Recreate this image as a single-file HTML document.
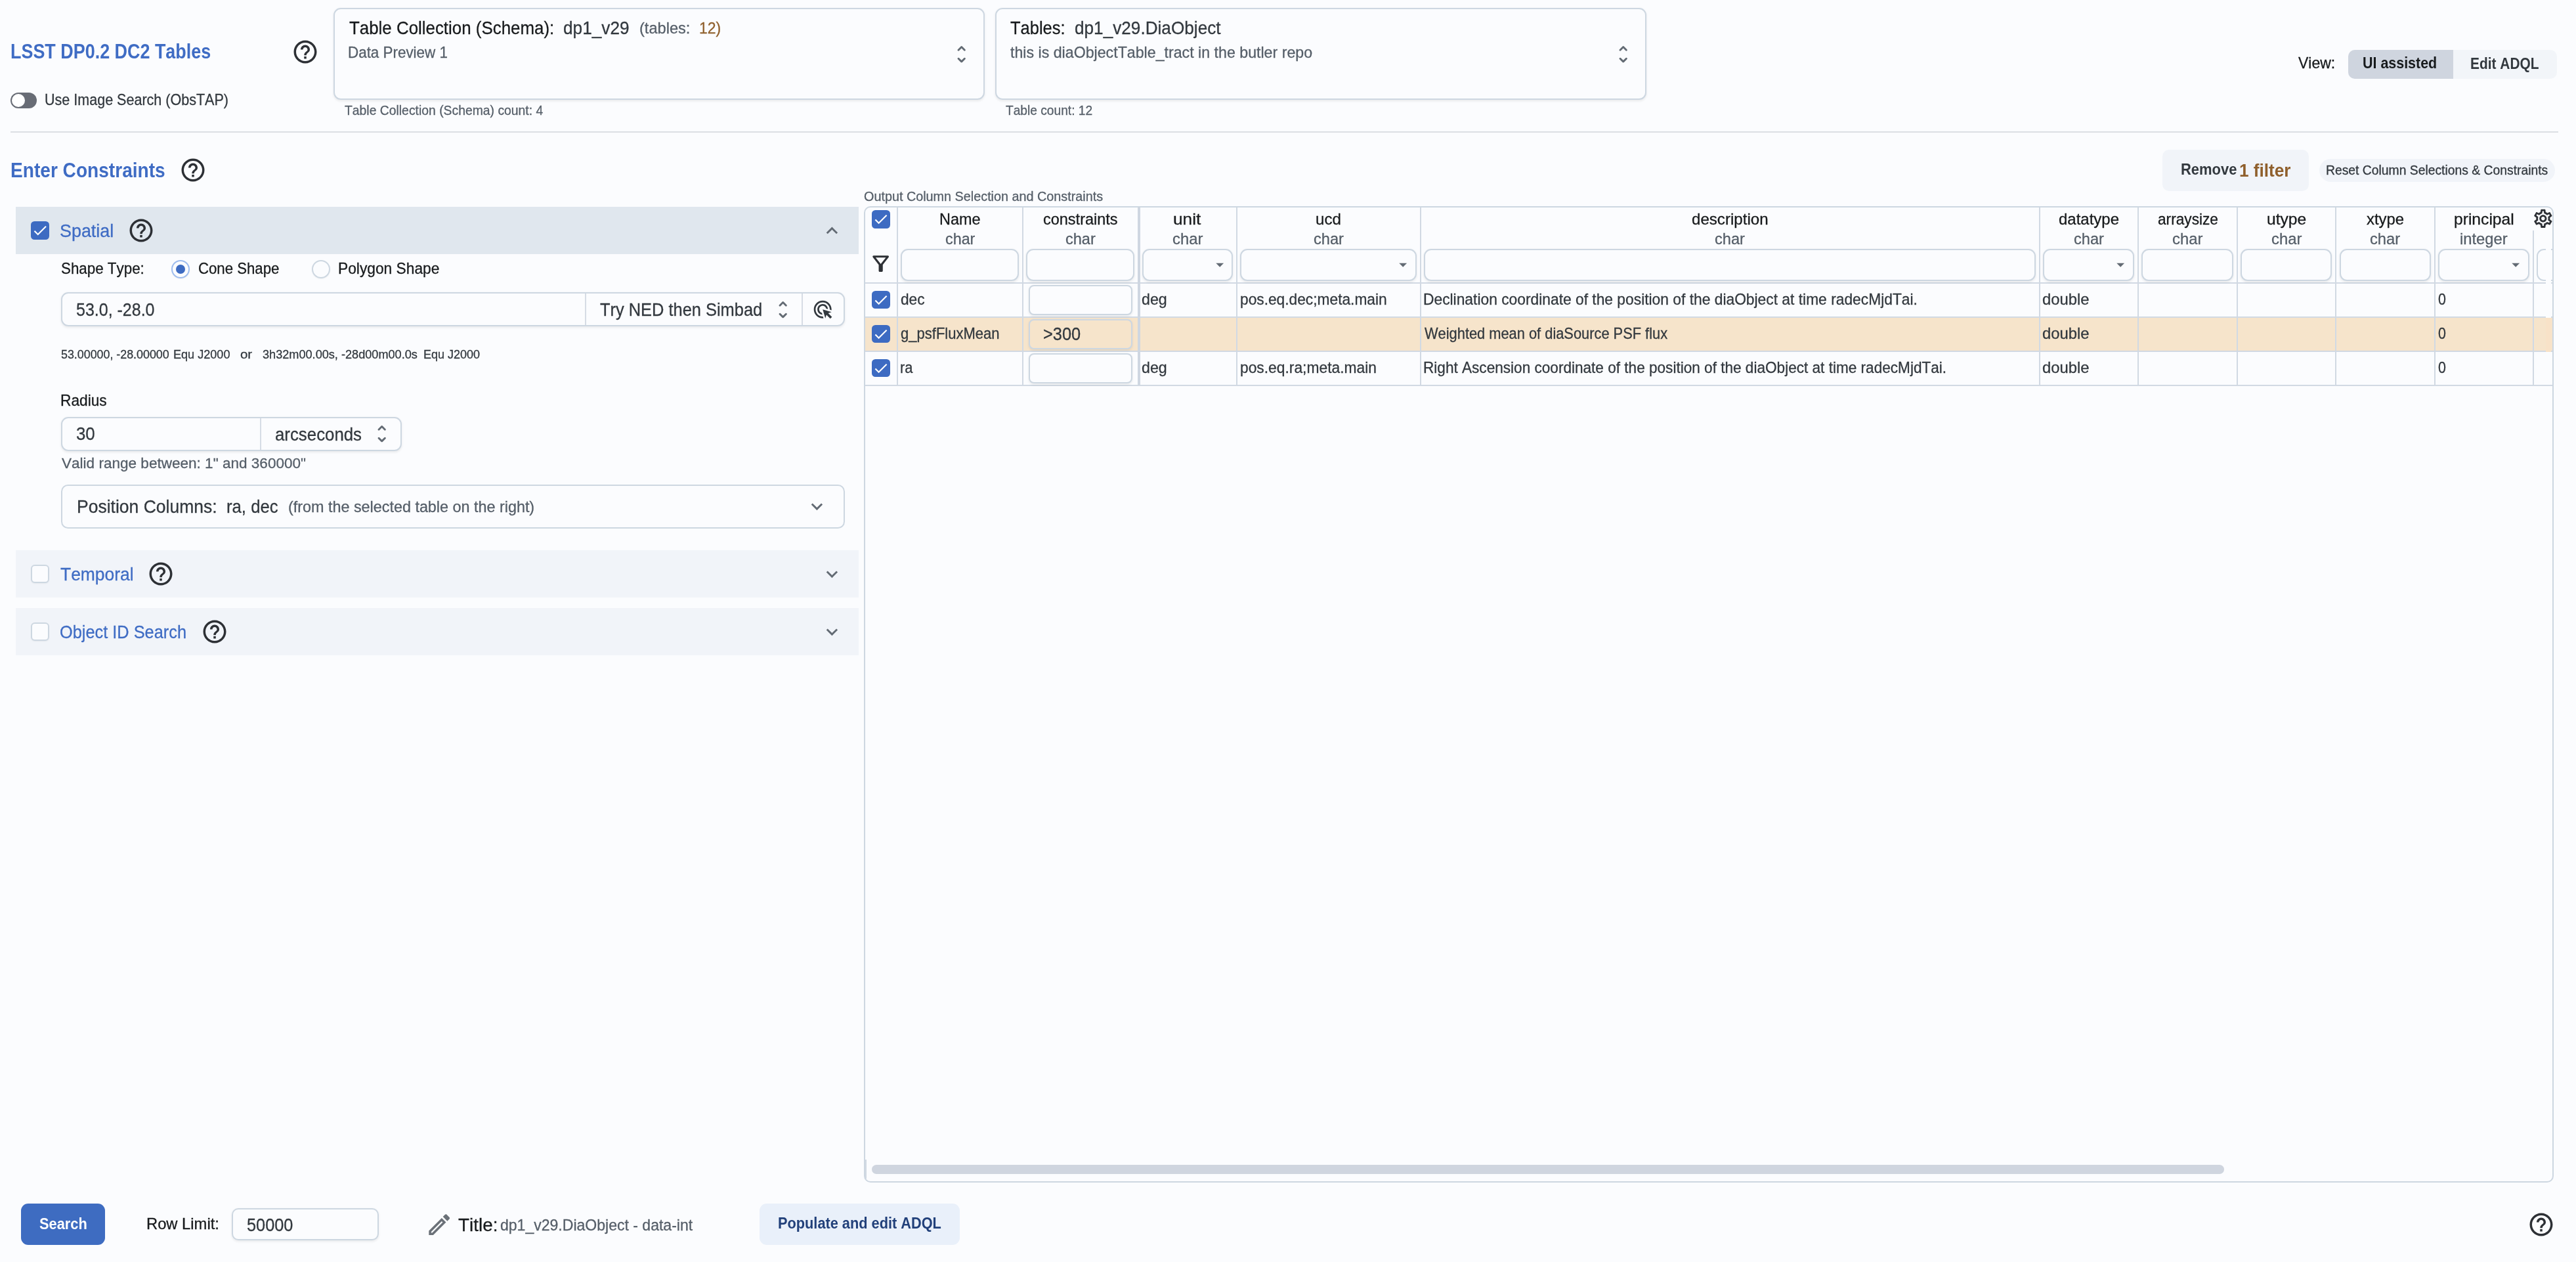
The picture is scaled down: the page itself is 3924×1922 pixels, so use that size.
<!DOCTYPE html>
<html lang="en"><head><meta charset="utf-8"><title>TAP Search</title>
<style>
html,body{margin:0;padding:0;}
body{width:3924px;height:1922px;background:#fbfcfe;position:relative;overflow:hidden;
font-family:"Liberation Sans",sans-serif;font-kerning:none;font-variant-ligatures:none;}
div,svg.i,.t{position:absolute;}
div{box-sizing:border-box;}
.b{background:#fbfcfe;}
.t{white-space:pre;line-height:1;display:inline-block;transform-origin:0 0;-webkit-text-stroke:0.3px currentColor;}
.bd{-webkit-text-stroke:0;}
#root{left:0;top:0;width:3924px;height:1922px;will-change:transform;}
</style></head><body><div id="root">
<div class="b" style="left:508px;top:12px;width:992px;height:140px;border:2px solid #cdd7e1;border-radius:11px;box-shadow:0 1.8px 3.6px rgba(21,21,21,0.08);"></div>
<div class="b" style="left:1516px;top:12px;width:992px;height:140px;border:2px solid #cdd7e1;border-radius:11px;box-shadow:0 1.8px 3.6px rgba(21,21,21,0.08);"></div>
<svg class="i" style="left:1446.65px;top:64.65px" width="35.4" height="35.4" viewBox="0 0 24 24" fill="#636b74"><path d="m12 5.83 2.46 2.46c.39.39 1.02.39 1.41 0 .39-.39.39-1.02 0-1.41L12.7 3.7a.9959.9959 0 0 0-1.41 0L8.12 6.88c-.39.39-.39 1.02 0 1.41.39.39 1.02.39 1.41 0L12 5.83zm0 12.34-2.46-2.46a.9959.9959 0 0 0-1.41 0c-.39.39-.39 1.02 0 1.41l3.17 3.18c.39.39 1.02.39 1.41 0l3.17-3.17c.39-.39.39-1.02 0-1.41a.9959.9959 0 0 0-1.41 0L12 18.17z"/></svg>
<svg class="i" style="left:2454.90px;top:64.65px" width="35.4" height="35.4" viewBox="0 0 24 24" fill="#636b74"><path d="m12 5.83 2.46 2.46c.39.39 1.02.39 1.41 0 .39-.39.39-1.02 0-1.41L12.7 3.7a.9959.9959 0 0 0-1.41 0L8.12 6.88c-.39.39-.39 1.02 0 1.41.39.39 1.02.39 1.41 0L12 5.83zm0 12.34-2.46-2.46a.9959.9959 0 0 0-1.41 0c-.39.39-.39 1.02 0 1.41l3.17 3.18c.39.39 1.02.39 1.41 0l3.17-3.17c.39-.39.39-1.02 0-1.41a.9959.9959 0 0 0-1.41 0L12 18.17z"/></svg>
<svg class="i" style="left:443.65px;top:58.15px" width="42" height="42" viewBox="0 0 24 24" fill="#2d3035"><path d="M11 18h2v-2h-2v2zm1-16C6.48 2 2 6.48 2 12s4.48 10 10 10 10-4.48 10-10S17.52 2 12 2zm0 18c-4.41 0-8-3.59-8-8s3.59-8 8-8 8 3.59 8 8-3.59 8-8 8zm0-14c-2.21 0-4 1.79-4 4h2c0-1.1.9-2 2-2s2 .9 2 2c0 2-3 1.75-3 5h2c0-2.25 3-2.5 3-5 0-2.21-1.79-4-4-4z"/></svg>
<svg class="i" style="left:273.15px;top:237.90px" width="42" height="42" viewBox="0 0 24 24" fill="#2d3035"><path d="M11 18h2v-2h-2v2zm1-16C6.48 2 2 6.48 2 12s4.48 10 10 10 10-4.48 10-10S17.52 2 12 2zm0 18c-4.41 0-8-3.59-8-8s3.59-8 8-8 8 3.59 8 8-3.59 8-8 8zm0-14c-2.21 0-4 1.79-4 4h2c0-1.1.9-2 2-2s2 .9 2 2c0 2-3 1.75-3 5h2c0-2.25 3-2.5 3-5 0-2.21-1.79-4-4-4z"/></svg>
<div style="left:16px;top:141px;width:40px;height:24px;background:#686c75;border-radius:12px;"></div>
<div style="left:17.7px;top:142.7px;width:20.500000000000004px;height:20.5px;background:#ffffff;border-radius:50%;"></div>
<div style="left:16px;top:200px;width:3881px;height:2px;background:#dcdfe4;"></div>
<div style="left:3577px;top:76px;width:318px;height:44px;background:#f2f5f9;border-radius:10px;"></div>
<div style="left:3577px;top:76px;width:160px;height:44px;background:#cfd5df;border-radius:10px 0 0 10px;"></div>
<div style="left:3294px;top:228px;width:223px;height:63px;background:#f1f4f9;border-radius:10px;"></div>
<div style="left:3533px;top:242px;width:359px;height:35px;background:#f1f4f9;border-radius:18px;"></div>
<div style="left:24px;top:315px;width:1284px;height:72px;background:#e0e7ee;"></div>
<div style="left:24px;top:838px;width:1284px;height:72px;background:#f1f4f9;"></div>
<div style="left:24px;top:926px;width:1284px;height:72px;background:#f1f4f9;"></div>
<svg class="i" style="left:1249.90px;top:333.50px" width="34.8" height="34.8" viewBox="0 0 24 24" fill="#636b74"><path d="M7.41 15.41 12 10.83l4.59 4.58L18 14l-6-6-6 6z"/></svg>
<svg class="i" style="left:1249.90px;top:857.20px" width="34.8" height="34.8" viewBox="0 0 24 24" fill="#636b74"><path d="M7.41 8.59 12 13.17l4.59-4.58L18 10l-6 6-6-6 1.41-1.41z"/></svg>
<svg class="i" style="left:1249.90px;top:945.20px" width="34.8" height="34.8" viewBox="0 0 24 24" fill="#636b74"><path d="M7.41 8.59 12 13.17l4.59-4.58L18 10l-6 6-6-6 1.41-1.41z"/></svg>
<svg class="i" style="left:194.15px;top:330.40px" width="42" height="42" viewBox="0 0 24 24" fill="#2d3035"><path d="M11 18h2v-2h-2v2zm1-16C6.48 2 2 6.48 2 12s4.48 10 10 10 10-4.48 10-10S17.52 2 12 2zm0 18c-4.41 0-8-3.59-8-8s3.59-8 8-8 8 3.59 8 8-3.59 8-8 8zm0-14c-2.21 0-4 1.79-4 4h2c0-1.1.9-2 2-2s2 .9 2 2c0 2-3 1.75-3 5h2c0-2.25 3-2.5 3-5 0-2.21-1.79-4-4-4z"/></svg>
<svg class="i" style="left:224.15px;top:852.90px" width="42" height="42" viewBox="0 0 24 24" fill="#2d3035"><path d="M11 18h2v-2h-2v2zm1-16C6.48 2 2 6.48 2 12s4.48 10 10 10 10-4.48 10-10S17.52 2 12 2zm0 18c-4.41 0-8-3.59-8-8s3.59-8 8-8 8 3.59 8 8-3.59 8-8 8zm0-14c-2.21 0-4 1.79-4 4h2c0-1.1.9-2 2-2s2 .9 2 2c0 2-3 1.75-3 5h2c0-2.25 3-2.5 3-5 0-2.21-1.79-4-4-4z"/></svg>
<svg class="i" style="left:305.90px;top:940.90px" width="42" height="42" viewBox="0 0 24 24" fill="#2d3035"><path d="M11 18h2v-2h-2v2zm1-16C6.48 2 2 6.48 2 12s4.48 10 10 10 10-4.48 10-10S17.52 2 12 2zm0 18c-4.41 0-8-3.59-8-8s3.59-8 8-8 8 3.59 8 8-3.59 8-8 8zm0-14c-2.21 0-4 1.79-4 4h2c0-1.1.9-2 2-2s2 .9 2 2c0 2-3 1.75-3 5h2c0-2.25 3-2.5 3-5 0-2.21-1.79-4-4-4z"/></svg>
<div style="left:47px;top:337px;width:28px;height:28px;background:#3d6bc2;border-radius:5.5px;"></div>
<svg class="i" style="left:47.98px;top:338.18px" width="26.040000000000003" height="26.040000000000003" viewBox="0 0 24 24" fill="#ffffff"><path d="M9 16.17 4.83 12l-1.42 1.41L9 19 21 7l-1.41-1.41z"/></svg>
<div class="b" style="left:47px;top:860px;width:28px;height:28px;border:2px solid #cdd7e1;border-radius:6px;box-shadow:0 1px 2px rgba(21,21,21,0.05);"></div>
<div class="b" style="left:47px;top:948px;width:28px;height:28px;border:2px solid #cdd7e1;border-radius:6px;box-shadow:0 1px 2px rgba(21,21,21,0.05);"></div>
<div class="b" style="left:261px;top:396px;width:28px;height:28px;border:2px solid #9fbdee;border-radius:50%;box-shadow:0 1px 2px rgba(21,21,21,0.05);"></div>
<div style="left:268px;top:403px;width:14px;height:14px;background:#3d6bc2;border-radius:50%;"></div>
<div class="b" style="left:475px;top:396px;width:28px;height:28px;border:2px solid #cdd7e1;border-radius:50%;box-shadow:0 1px 2px rgba(21,21,21,0.05);"></div>
<div class="b" style="left:93px;top:445px;width:1194px;height:52px;border:2px solid #cdd7e1;border-radius:11px;box-shadow:0 1.8px 3.6px rgba(21,21,21,0.08);"></div>
<div style="left:891px;top:447px;width:2px;height:48px;background:#d6dce5;"></div>
<div style="left:1221px;top:447px;width:2px;height:48px;background:#d6dce5;"></div>
<svg class="i" style="left:1175.15px;top:453.80px" width="35.4" height="35.4" viewBox="0 0 24 24" fill="#636b74"><path d="m12 5.83 2.46 2.46c.39.39 1.02.39 1.41 0 .39-.39.39-1.02 0-1.41L12.7 3.7a.9959.9959 0 0 0-1.41 0L8.12 6.88c-.39.39-.39 1.02 0 1.41.39.39 1.02.39 1.41 0L12 5.83zm0 12.34-2.46-2.46a.9959.9959 0 0 0-1.41 0c-.39.39-.39 1.02 0 1.41l3.17 3.18c.39.39 1.02.39 1.41 0l3.17-3.17c.39-.39.39-1.02 0-1.41a.9959.9959 0 0 0-1.41 0L12 18.17z"/></svg>
<svg class="i" style="left:1236.70px;top:455.00px" width="32.4" height="32.4" viewBox="0 0 24 24" fill="#32383e"><path d="M11.71 17.99C8.53 17.84 6 15.22 6 12c0-3.31 2.69-6 6-6 3.22 0 5.84 2.53 5.99 5.71l-2.1-.63C15.48 9.31 13.89 8 12 8c-2.21 0-4 1.79-4 4 0 1.89 1.31 3.48 3.08 3.89l.63 2.1zM22 12c0 .3-.01.6-.04.9l-1.97-.59c.01-.1.01-.21.01-.31 0-4.42-3.58-8-8-8s-8 3.58-8 8 3.58 8 8 8c.1 0 .21 0 .31-.01l.59 1.97c-.3.03-.6.04-.9.04-5.52 0-10-4.48-10-10S6.48 2 12 2s10 4.48 10 10zm-3.77 4.26L22 15l-10-3 3 10 1.26-3.77 4.27 4.27 1.98-1.98-4.28-4.26z"/></svg>
<div class="b" style="left:93px;top:635px;width:519px;height:52px;border:2px solid #cdd7e1;border-radius:11px;box-shadow:0 1.8px 3.6px rgba(21,21,21,0.08);"></div>
<div style="left:396px;top:637px;width:2px;height:48px;background:#d6dce5;"></div>
<svg class="i" style="left:564.15px;top:642.80px" width="35.4" height="35.4" viewBox="0 0 24 24" fill="#636b74"><path d="m12 5.83 2.46 2.46c.39.39 1.02.39 1.41 0 .39-.39.39-1.02 0-1.41L12.7 3.7a.9959.9959 0 0 0-1.41 0L8.12 6.88c-.39.39-.39 1.02 0 1.41.39.39 1.02.39 1.41 0L12 5.83zm0 12.34-2.46-2.46a.9959.9959 0 0 0-1.41 0c-.39.39-.39 1.02 0 1.41l3.17 3.18c.39.39 1.02.39 1.41 0l3.17-3.17c.39-.39.39-1.02 0-1.41a.9959.9959 0 0 0-1.41 0L12 18.17z"/></svg>
<div class="b" style="left:93px;top:738px;width:1194px;height:67px;border:2px solid #cdd7e1;border-radius:10.5px;"></div>
<svg class="i" style="left:1227.20px;top:754.00px" width="34.8" height="34.8" viewBox="0 0 24 24" fill="#636b74"><path d="M7.41 8.59 12 13.17l4.59-4.58L18 10l-6 6-6-6 1.41-1.41z"/></svg>
<div style="left:1318px;top:484px;width:2570px;height:50px;background:#f6e4cb;"></div>
<div style="left:1318px;top:430px;width:2570px;height:2px;background:#d1d9e3;"></div>
<div style="left:1318px;top:482px;width:2570px;height:2px;background:#d1d9e3;"></div>
<div style="left:1318px;top:534px;width:2570px;height:2px;background:#d1d9e3;"></div>
<div style="left:1318px;top:586px;width:2570px;height:2px;background:#d1d9e3;"></div>
<div style="left:1366px;top:316px;width:2px;height:271px;background:#d1d9e3;"></div>
<div style="left:1557px;top:316px;width:2px;height:271px;background:#d1d9e3;"></div>
<div style="left:1883px;top:316px;width:2px;height:271px;background:#d1d9e3;"></div>
<div style="left:2163px;top:316px;width:2px;height:271px;background:#d1d9e3;"></div>
<div style="left:3106px;top:316px;width:2px;height:271px;background:#d1d9e3;"></div>
<div style="left:3256px;top:316px;width:2px;height:271px;background:#d1d9e3;"></div>
<div style="left:3407px;top:316px;width:2px;height:271px;background:#d1d9e3;"></div>
<div style="left:3557px;top:316px;width:2px;height:271px;background:#d1d9e3;"></div>
<div style="left:3708px;top:316px;width:2px;height:271px;background:#d1d9e3;"></div>
<div style="left:3858px;top:351px;width:2px;height:236px;background:#d1d9e3;"></div>
<div style="left:1733px;top:316px;width:4px;height:271px;background:#cfd7e1;"></div>
<div style="left:1318px;top:1766px;width:2px;height:29px;background:#d1d9e3;"></div>
<div class="b" style="left:1372px;top:379px;width:180px;height:49px;border:2px solid #cdd7e1;border-radius:11px;box-shadow:0 1.8px 3.6px rgba(21,21,21,0.08);"></div>
<div class="b" style="left:1563px;top:379px;width:165px;height:49px;border:2px solid #cdd7e1;border-radius:11px;box-shadow:0 1.8px 3.6px rgba(21,21,21,0.08);"></div>
<div class="b" style="left:1740px;top:379px;width:138px;height:49px;border:2px solid #cdd7e1;border-radius:11px;box-shadow:0 1.8px 3.6px rgba(21,21,21,0.08);"></div>
<div class="b" style="left:1889px;top:379px;width:269px;height:49px;border:2px solid #cdd7e1;border-radius:11px;box-shadow:0 1.8px 3.6px rgba(21,21,21,0.08);"></div>
<div class="b" style="left:2169px;top:379px;width:932px;height:49px;border:2px solid #cdd7e1;border-radius:11px;box-shadow:0 1.8px 3.6px rgba(21,21,21,0.08);"></div>
<div class="b" style="left:3112px;top:379px;width:139px;height:49px;border:2px solid #cdd7e1;border-radius:11px;box-shadow:0 1.8px 3.6px rgba(21,21,21,0.08);"></div>
<div class="b" style="left:3262px;top:379px;width:140px;height:49px;border:2px solid #cdd7e1;border-radius:11px;box-shadow:0 1.8px 3.6px rgba(21,21,21,0.08);"></div>
<div class="b" style="left:3413px;top:379px;width:139px;height:49px;border:2px solid #cdd7e1;border-radius:11px;box-shadow:0 1.8px 3.6px rgba(21,21,21,0.08);"></div>
<div class="b" style="left:3564px;top:379px;width:139px;height:49px;border:2px solid #cdd7e1;border-radius:11px;box-shadow:0 1.8px 3.6px rgba(21,21,21,0.08);"></div>
<div class="b" style="left:3714px;top:379px;width:139px;height:49px;border:2px solid #cdd7e1;border-radius:11px;box-shadow:0 1.8px 3.6px rgba(21,21,21,0.08);"></div>
<div class="b" style="left:3864px;top:379px;width:24px;height:49px;border:2px solid #cdd7e1;border-right:none;border-radius:11px 0 0 11px;"></div>
<svg class="i" style="left:1843.80px;top:388.60px" width="28.4" height="28.4" viewBox="0 0 24 24" fill="#636b74"><path d="M7 10l5 5 5-5z"/></svg>
<svg class="i" style="left:2123.10px;top:388.60px" width="28.4" height="28.4" viewBox="0 0 24 24" fill="#636b74"><path d="M7 10l5 5 5-5z"/></svg>
<svg class="i" style="left:3216.10px;top:388.60px" width="28.4" height="28.4" viewBox="0 0 24 24" fill="#636b74"><path d="M7 10l5 5 5-5z"/></svg>
<svg class="i" style="left:3818.10px;top:388.60px" width="28.4" height="28.4" viewBox="0 0 24 24" fill="#636b74"><path d="M7 10l5 5 5-5z"/></svg>
<div class="b" style="left:1567px;top:434px;width:158px;height:46px;border:2px solid #cdd7e1;border-radius:8px;background:#fbfcfe;box-shadow:0 1.8px 3.6px rgba(21,21,21,0.08);"></div>
<div class="b" style="left:1567px;top:486px;width:158px;height:46px;border:2px solid #cdd7e1;border-radius:8px;background:#f6e4cb;box-shadow:0 1.8px 3.6px rgba(21,21,21,0.08);"></div>
<div class="b" style="left:1567px;top:538px;width:158px;height:46px;border:2px solid #cdd7e1;border-radius:8px;background:#fbfcfe;box-shadow:0 1.8px 3.6px rgba(21,21,21,0.08);"></div>
<div style="left:1328px;top:320px;width:28px;height:28px;background:#3d6bc2;border-radius:5.5px;"></div>
<svg class="i" style="left:1328.96px;top:321.16px" width="25.575000000000003" height="25.575000000000003" viewBox="0 0 24 24" fill="#ffffff"><path d="M9 16.17 4.83 12l-1.42 1.41L9 19 21 7l-1.41-1.41z"/></svg>
<div style="left:1328px;top:443px;width:28px;height:27px;background:#3d6bc2;border-radius:5.5px;"></div>
<svg class="i" style="left:1328.96px;top:444.16px" width="25.575000000000003" height="25.575000000000003" viewBox="0 0 24 24" fill="#ffffff"><path d="M9 16.17 4.83 12l-1.42 1.41L9 19 21 7l-1.41-1.41z"/></svg>
<div style="left:1328px;top:495px;width:28px;height:27px;background:#3d6bc2;border-radius:5.5px;"></div>
<svg class="i" style="left:1328.96px;top:496.16px" width="25.575000000000003" height="25.575000000000003" viewBox="0 0 24 24" fill="#ffffff"><path d="M9 16.17 4.83 12l-1.42 1.41L9 19 21 7l-1.41-1.41z"/></svg>
<div style="left:1328px;top:547px;width:28px;height:27px;background:#3d6bc2;border-radius:5.5px;"></div>
<svg class="i" style="left:1328.96px;top:547.91px" width="25.575000000000003" height="25.575000000000003" viewBox="0 0 24 24" fill="#ffffff"><path d="M9 16.17 4.83 12l-1.42 1.41L9 19 21 7l-1.41-1.41z"/></svg>
<svg class="i" style="left:1323.15px;top:383.05px" width="37.3" height="37.3" viewBox="0 0 24 24" fill="#2d3035"><path d="M7 6h10l-5.01 6.3L7 6zm-2.75-.39C6.27 8.2 10 13 10 13v6c0 .55.45 1 1 1h2c.55 0 1-.45 1-1v-6s3.72-4.8 5.74-7.39c.51-.66.04-1.61-.79-1.61H5.04c-.83 0-1.3.95-.79 1.61z"/></svg>
<svg class="i" style="left:3856.65px;top:316.05px" width="33.7" height="33.7" viewBox="0 0 24 24" fill="#2d3035"><path d="M19.43 12.98c.04-.32.07-.64.07-.98 0-.34-.03-.66-.07-.98l2.11-1.65c.19-.15.24-.42.12-.64l-2-3.46c-.09-.16-.26-.25-.44-.25-.06 0-.12.01-.17.03l-2.49 1c-.52-.4-1.08-.73-1.69-.98l-.38-2.65C14.46 2.18 14.25 2 14 2h-4c-.25 0-.46.18-.49.42l-.38 2.65c-.61.25-1.17.59-1.69.98l-2.49-1c-.06-.02-.12-.03-.18-.03-.17 0-.34.09-.43.25l-2 3.46c-.13.22-.07.49.12.64l2.11 1.65c-.04.32-.07.65-.07.98 0 .33.03.66.07.98l-2.11 1.65c-.19.15-.24.42-.12.64l2 3.46c.09.16.26.25.44.25.06 0 .12-.01.17-.03l2.49-1c.52.4 1.08.73 1.69.98l.38 2.65c.03.24.24.42.49.42h4c.25 0 .46-.18.49-.42l.38-2.65c.61-.25 1.17-.59 1.69-.98l2.49 1c.06.02.12.03.18.03.17 0 .34-.09.43-.25l2-3.46c.12-.22.07-.49-.12-.64l-2.11-1.65zm-1.98-1.71c.04.31.05.52.05.73 0 .21-.02.43-.05.73l-.14 1.13.89.7 1.08.84-.7 1.21-1.27-.51-1.04-.42-.9.68c-.43.32-.84.56-1.25.73l-1.06.43-.16 1.13-.2 1.35h-1.4l-.19-1.35-.16-1.13-1.06-.43c-.43-.18-.83-.41-1.23-.71l-.91-.7-1.06.43-1.27.51-.7-1.21 1.08-.84.89-.7-.14-1.13c-.03-.31-.05-.54-.05-.74s.02-.43.05-.73l.14-1.13-.89-.7-1.08-.84.7-1.21 1.27.51 1.04.42.9-.68c.43-.32.84-.56 1.25-.73l1.06-.43.16-1.13.2-1.35h1.39l.19 1.35.16 1.13 1.06.43c.43.18.83.41 1.23.71l.91.7 1.06-.43 1.27-.51.7 1.21-1.07.85-.89.7.14 1.13zM12 8c-2.21 0-4 1.79-4 4s1.79 4 4 4 4-1.79 4-4-1.79-4-4-4zm0 6c-1.1 0-2-.9-2-2s.9-2 2-2 2 .9 2 2-.9 2-2 2z"/></svg>
<div style="left:3878px;top:352px;width:8px;height:132px;background:#fbfcfe;"></div>
<div style="left:3878px;top:484px;width:8px;height:52px;background:#f8e2c8;"></div>
<div class="b" style="left:1316px;top:314px;width:2574px;height:1487px;border:2px solid #cdd7e1;border-radius:10px;background:transparent;"></div>
<div style="left:1328px;top:1774px;width:2060px;height:14px;background:#cfd5df;border-radius:7px;"></div>
<div style="left:32px;top:1833px;width:128px;height:63px;background:#3e6cc1;border-radius:11px;"></div>
<div class="b" style="left:353px;top:1840px;width:224px;height:49px;border:2px solid #cdd7e1;border-radius:10px;box-shadow:0 1.8px 3.6px rgba(21,21,21,0.08);"></div>
<svg class="i" style="left:647.60px;top:1843.70px" width="42.4" height="42.4" viewBox="0 0 24 24" fill="#6b7178"><path d="m14.06 9.02.92.92L5.92 19H5v-.92l9.06-9.06M17.66 3c-.25 0-.51.1-.7.29l-1.83 1.83 3.75 3.75 1.83-1.83c.39-.39.39-1.02 0-1.41l-2.34-2.34c-.2-.2-.45-.29-.71-.29zm-3.6 3.19L3 17.25V21h3.75L17.81 9.94l-3.75-3.75z"/></svg>
<div style="left:1157px;top:1833px;width:305px;height:63px;background:#e9f0fa;border-radius:11px;"></div>
<svg class="i" style="left:3849.65px;top:1844.00px" width="42" height="42" viewBox="0 0 24 24" fill="#2d3035"><path d="M11 18h2v-2h-2v2zm1-16C6.48 2 2 6.48 2 12s4.48 10 10 10 10-4.48 10-10S17.52 2 12 2zm0 18c-4.41 0-8-3.59-8-8s3.59-8 8-8 8 3.59 8 8-3.59 8-8 8zm0-14c-2.21 0-4 1.79-4 4h2c0-1.1.9-2 2-2s2 .9 2 2c0 2-3 1.75-3 5h2c0-2.25 3-2.5 3-5 0-2.21-1.79-4-4-4z"/></svg>
<span class="t bd" style="left:16.05px;top:64.11px;font-size:30.94px;transform:scaleX(0.8702);color:#3f6cc4;font-weight:700;">LSST DP0.2 DC2 Tables</span>
<span class="t" style="left:68.09px;top:140.75px;font-size:23.69px;transform:scaleX(0.9089);color:#32383e;">Use Image Search (ObsTAP)</span>
<span class="t" style="left:531.52px;top:28.89px;font-size:27.07px;transform:scaleX(0.9565);color:#171a1c;">Table Collection (Schema):</span>
<span class="t" style="left:858.00px;top:28.89px;font-size:27.07px;transform:scaleX(0.9687);color:#32383e;">dp1_v29</span>
<span class="t" style="left:973.89px;top:31.75px;font-size:23.69px;transform:scaleX(0.9959);color:#555e68;">(tables:</span>
<span class="t" style="left:1064.60px;top:31.96px;font-size:23.44px;transform:scaleX(0.9792);color:#8f5f2c;">12)</span>
<span class="t" style="left:530.26px;top:68.75px;font-size:23.69px;transform:scaleX(0.9459);color:#555e68;">Data Preview 1</span>
<span class="t" style="left:524.91px;top:158.12px;font-size:20.3px;transform:scaleX(0.9541);color:#555e68;">Table Collection (Schema) count: 4</span>
<span class="t" style="left:1539.03px;top:28.89px;font-size:27.07px;transform:scaleX(0.9426);color:#171a1c;">Tables:</span>
<span class="t" style="left:1636.75px;top:28.89px;font-size:27.07px;transform:scaleX(0.9668);color:#32383e;">dp1_v29.DiaObject</span>
<span class="t" style="left:1539.25px;top:68.75px;font-size:23.69px;transform:scaleX(0.9788);color:#555e68;">this is diaObjectTable_tract in the butler repo</span>
<span class="t" style="left:1532.42px;top:158.12px;font-size:20.3px;transform:scaleX(0.9452);color:#555e68;">Table count: 12</span>
<span class="t" style="left:3501.25px;top:85.25px;font-size:23.69px;transform:scaleX(0.9700);color:#171a1c;">View:</span>
<span class="t bd" style="left:3599.06px;top:85.25px;font-size:23.69px;transform:scaleX(0.9050);color:#171a1c;font-weight:700;">UI assisted</span>
<span class="t bd" style="left:3762.70px;top:84.92px;font-size:24.07px;transform:scaleX(0.8689);color:#32383e;font-weight:700;">Edit ADQL</span>
<span class="t bd" style="left:15.67px;top:244.10px;font-size:31.54px;transform:scaleX(0.8910);color:#3f6cc4;font-weight:700;">Enter Constraints</span>
<span class="t bd" style="left:3321.88px;top:247.25px;font-size:23.69px;transform:scaleX(0.9273);color:#32383e;font-weight:700;">Remove</span>
<span class="t bd" style="left:3411.00px;top:246.19px;font-size:27.07px;transform:scaleX(0.9671);color:#8f5f2c;font-weight:700;">1 filter</span>
<span class="t" style="left:3542.76px;top:249.12px;font-size:20.3px;transform:scaleX(0.9527);color:#32383e;">Reset Column Selections &amp; Constraints</span>
<span class="t" style="left:1315.66px;top:288.87px;font-size:20.3px;transform:scaleX(0.9759);color:#555e68;">Output Column Selection and Constraints</span>
<span class="t" style="left:91.13px;top:338.39px;font-size:27.07px;transform:scaleX(0.9942);color:#3f6cc4;">Spatial</span>
<span class="t" style="left:92.58px;top:397.75px;font-size:23.69px;transform:scaleX(0.9440);color:#171a1c;">Shape Type:</span>
<span class="t" style="left:302.22px;top:397.75px;font-size:23.69px;transform:scaleX(0.9366);color:#171a1c;">Cone Shape</span>
<span class="t" style="left:515.23px;top:397.75px;font-size:23.69px;transform:scaleX(0.9607);color:#171a1c;">Polygon Shape</span>
<span class="t" style="left:115.60px;top:458.63px;font-size:26.78px;transform:scaleX(0.9335);color:#32383e;">53.0, -28.0</span>
<span class="t" style="left:914.28px;top:458.39px;font-size:27.07px;transform:scaleX(0.9392);color:#32383e;">Try NED then Simbad</span>
<span class="t" style="left:92.89px;top:530.32px;font-size:19.17px;transform:scaleX(0.9312);color:#32383e;">53.00000, -28.00000</span>
<span class="t" style="left:264.37px;top:530.32px;font-size:19.17px;transform:scaleX(0.9436);color:#32383e;">Equ J2000</span>
<span class="t" style="left:366.49px;top:530.32px;font-size:19.17px;transform:scaleX(1.0676);color:#32383e;">or</span>
<span class="t" style="left:400.16px;top:530.32px;font-size:19.17px;transform:scaleX(0.9464);color:#32383e;">3h32m00.00s, -28d00m00.0s</span>
<span class="t" style="left:644.87px;top:530.32px;font-size:19.17px;transform:scaleX(0.9380);color:#32383e;">Equ J2000</span>
<span class="t" style="left:92.24px;top:598.75px;font-size:23.69px;transform:scaleX(0.9586);color:#171a1c;">Radius</span>
<span class="t" style="left:115.62px;top:648.13px;font-size:26.78px;transform:scaleX(0.9652);color:#32383e;">30</span>
<span class="t" style="left:418.50px;top:647.89px;font-size:27.07px;transform:scaleX(0.9539);color:#32383e;">arcseconds</span>
<span class="t" style="left:93.50px;top:694.58px;font-size:22.0px;transform:scaleX(1.0249);color:#555e68;">Valid range between: 1" and 360000"</span>
<span class="t" style="left:117.43px;top:758.39px;font-size:27.07px;transform:scaleX(0.9793);color:#32383e;">Position Columns:</span>
<span class="t" style="left:345.39px;top:758.39px;font-size:27.07px;transform:scaleX(0.9505);color:#32383e;">ra, dec</span>
<span class="t" style="left:439.40px;top:761.25px;font-size:23.69px;transform:scaleX(0.9859);color:#555e68;">(from the selected table on the right)</span>
<span class="t" style="left:91.76px;top:860.89px;font-size:27.07px;transform:scaleX(0.9764);color:#3f6cc4;">Temporal</span>
<span class="t" style="left:91.15px;top:948.89px;font-size:27.07px;transform:scaleX(0.9368);color:#3f6cc4;">Object ID Search</span>
<span class="t" style="left:1430.93px;top:323.45px;font-size:23.69px;transform:scaleX(0.9885);color:#171a1c;">Name</span>
<span class="t" style="left:1439.86px;top:352.75px;font-size:23.69px;transform:scaleX(0.9845);color:#555e68;">char</span>
<span class="t" style="left:1588.85px;top:323.45px;font-size:23.69px;transform:scaleX(0.9917);color:#171a1c;">constraints</span>
<span class="t" style="left:1622.55px;top:352.75px;font-size:23.69px;transform:scaleX(0.9934);color:#555e68;">char</span>
<span class="t" style="left:1787.39px;top:323.45px;font-size:23.69px;transform:scaleX(1.1099);color:#171a1c;">unit</span>
<span class="t" style="left:1785.59px;top:352.75px;font-size:23.69px;transform:scaleX(1.0068);color:#555e68;">char</span>
<span class="t" style="left:2004.28px;top:323.45px;font-size:23.69px;transform:scaleX(1.0174);color:#171a1c;">ucd</span>
<span class="t" style="left:2001.10px;top:352.75px;font-size:23.69px;transform:scaleX(0.9957);color:#555e68;">char</span>
<span class="t" style="left:2577.34px;top:323.45px;font-size:23.69px;transform:scaleX(1.0176);color:#171a1c;">description</span>
<span class="t" style="left:2612.35px;top:352.75px;font-size:23.69px;transform:scaleX(0.9957);color:#555e68;">char</span>
<span class="t" style="left:3135.59px;top:323.45px;font-size:23.69px;transform:scaleX(1.0130);color:#171a1c;">datatype</span>
<span class="t" style="left:3158.60px;top:352.75px;font-size:23.69px;transform:scaleX(0.9957);color:#555e68;">char</span>
<span class="t" style="left:3286.89px;top:323.45px;font-size:23.69px;transform:scaleX(0.9571);color:#171a1c;">arraysize</span>
<span class="t" style="left:3309.34px;top:352.75px;font-size:23.69px;transform:scaleX(1.0068);color:#555e68;">char</span>
<span class="t" style="left:3453.00px;top:323.45px;font-size:23.69px;transform:scaleX(1.0386);color:#171a1c;">utype</span>
<span class="t" style="left:3459.84px;top:352.75px;font-size:23.69px;transform:scaleX(1.0068);color:#555e68;">char</span>
<span class="t" style="left:3605.08px;top:323.45px;font-size:23.69px;transform:scaleX(1.0080);color:#171a1c;">xtype</span>
<span class="t" style="left:3610.09px;top:352.75px;font-size:23.69px;transform:scaleX(1.0013);color:#555e68;">char</span>
<span class="t" style="left:3738.26px;top:323.45px;font-size:23.69px;transform:scaleX(1.0399);color:#171a1c;">principal</span>
<span class="t" style="left:3746.76px;top:352.75px;font-size:23.69px;transform:scaleX(1.0041);color:#555e68;">integer</span>
<span class="t" style="left:1371.90px;top:445.25px;font-size:23.69px;transform:scaleX(0.9567);color:#32383e;">dec</span>
<span class="t" style="left:1738.63px;top:445.25px;font-size:23.69px;transform:scaleX(0.9795);color:#32383e;">deg</span>
<span class="t" style="left:1888.88px;top:445.25px;font-size:23.69px;transform:scaleX(0.9598);color:#32383e;">pos.eq.dec;meta.main</span>
<span class="t" style="left:2167.73px;top:445.25px;font-size:23.69px;transform:scaleX(0.9627);color:#32383e;">Declination coordinate of the position of the diaObject at time radecMjdTai.</span>
<span class="t" style="left:3111.10px;top:445.25px;font-size:23.69px;transform:scaleX(1.0059);color:#32383e;">double</span>
<span class="t" style="left:3713.76px;top:445.46px;font-size:23.44px;transform:scaleX(0.9139);color:#32383e;">0</span>
<span class="t" style="left:1371.92px;top:497.00px;font-size:23.69px;transform:scaleX(0.9299);color:#32383e;">g_psfFluxMean</span>
<span class="t" style="left:1588.60px;top:495.63px;font-size:26.78px;transform:scaleX(0.9494);color:#32383e;">&gt;300</span>
<span class="t" style="left:2169.50px;top:497.00px;font-size:23.69px;transform:scaleX(0.9216);color:#32383e;">Weighted mean of diaSource PSF flux</span>
<span class="t" style="left:3111.10px;top:497.00px;font-size:23.69px;transform:scaleX(1.0059);color:#32383e;">double</span>
<span class="t" style="left:3713.76px;top:497.21px;font-size:23.44px;transform:scaleX(0.9139);color:#32383e;">0</span>
<span class="t" style="left:1371.40px;top:548.75px;font-size:23.69px;transform:scaleX(0.9236);color:#32383e;">ra</span>
<span class="t" style="left:1738.63px;top:548.75px;font-size:23.69px;transform:scaleX(0.9795);color:#32383e;">deg</span>
<span class="t" style="left:1888.88px;top:548.75px;font-size:23.69px;transform:scaleX(0.9630);color:#32383e;">pos.eq.ra;meta.main</span>
<span class="t" style="left:2167.75px;top:548.75px;font-size:23.69px;transform:scaleX(0.9534);color:#32383e;">Right Ascension coordinate of the position of the diaObject at time radecMjdTai.</span>
<span class="t" style="left:3111.10px;top:548.75px;font-size:23.69px;transform:scaleX(1.0059);color:#32383e;">double</span>
<span class="t" style="left:3713.76px;top:548.96px;font-size:23.44px;transform:scaleX(0.9139);color:#32383e;">0</span>
<span class="t bd" style="left:60.22px;top:1852.75px;font-size:23.69px;transform:scaleX(0.9205);color:#ffffff;font-weight:700;">Search</span>
<span class="t" style="left:223.40px;top:1852.75px;font-size:23.69px;transform:scaleX(1.0028);color:#171a1c;">Row Limit:</span>
<span class="t" style="left:376.14px;top:1852.58px;font-size:26.78px;transform:scaleX(0.9458);color:#32383e;">50000</span>
<span class="t" style="left:697.97px;top:1852.39px;font-size:27.07px;transform:scaleX(1.0301);color:#171a1c;">Title:</span>
<span class="t" style="left:762.38px;top:1855.25px;font-size:23.69px;transform:scaleX(0.9722);color:#555e68;">dp1_v29.DiaObject - data-int</span>
<span class="t bd" style="left:1185.15px;top:1852.25px;font-size:23.69px;transform:scaleX(0.9180);color:#21407a;font-weight:700;">Populate and edit ADQL</span>
</div></body></html>
